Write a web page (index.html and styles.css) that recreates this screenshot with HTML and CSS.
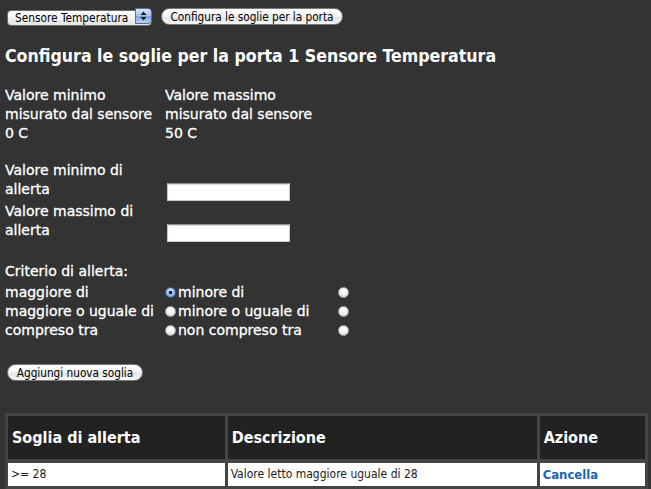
FILE: index.html
```html
<!DOCTYPE html>
<html lang="it">
<head>
<meta charset="utf-8">
<title>Soglie</title>
<link rel="stylesheet" href="styles.css">
</head>
<body>
<form class="toolbar">
  <div class="select-wrap">
    <select class="select"><option>Sensore Temperatura</option></select>
    <span class="select-arrows"><svg width="7" height="10" viewBox="0 0 7 10"><path d="M3.5 0.5 L6.5 4 L0.5 4 Z M3.5 9.5 L6.5 6 L0.5 6 Z" fill="#1a1a1a"/></svg></span>
  </div>
  <button type="button" class="btn">Configura le soglie per la porta</button>
</form>

<h2 class="title">Configura le soglie per la porta 1 Sensore Temperatura</h2>

<div class="info">
  <div>Valore minimo<br>misurato dal sensore<br>0 C</div>
  <div>Valore massimo<br>misurato dal sensore<br>50 C</div>
</div>

<div class="limits">
  <div class="lbl">Valore minimo di<br>allerta</div>
  <input class="field" type="text">
  <div class="lbl">Valore massimo di<br>allerta</div>
  <input class="field" type="text">
</div>

<div class="crit-title">Criterio di allerta:</div>
<div class="criteria">
  <span>maggiore di</span><input class="radio" type="radio" name="c" checked>
  <span>minore di</span><input class="radio" type="radio" name="c">
  <span>maggiore o uguale di</span><input class="radio" type="radio" name="c">
  <span>minore o uguale di</span><input class="radio" type="radio" name="c">
  <span>compreso tra</span><input class="radio" type="radio" name="c">
  <span>non compreso tra</span><input class="radio" type="radio" name="c">
</div>

<button type="button" class="btn btn-add">Aggiungi nuova soglia</button>

<table class="grid">
  <thead>
    <tr><th class="c1">Soglia di allerta</th><th class="c2">Descrizione</th><th class="c3">Azione</th></tr>
  </thead>
  <tbody>
    <tr><td>&gt;= 28</td><td>Valore letto maggiore uguale di 28</td><td><a class="link" href="#">Cancella</a></td></tr>
    <tr><td>&nbsp;</td><td>&nbsp;</td><td>&nbsp;</td></tr>
  </tbody>
</table>
</body>
</html>
```

FILE: styles.css
```css
html, body {
  background: #333333;
}
body {
  margin: 0;
  padding: 8px 3px 0 5px;
  color: #ffffff;
  font-family: "DejaVu Sans", sans-serif;
  font-size: 14px;
  line-height: 19px;
  overflow: hidden;
  height: 481px;
  -webkit-text-stroke: 0.3px #ffffff;
}

.toolbar {
  display: flex;
  align-items: flex-start;
  gap: 9px;
  margin: 0 0 0 2px;
  height: 17px;
}

.select-wrap {
  position: relative;
  width: 145px;
  height: 16px;
}
.select {
  appearance: none;
  -webkit-appearance: none;
  width: 145px;
  height: 16px;
  margin: 0;
  padding: 0 0 0 7px;
  border: 1px solid #6d6d6d;
  border-radius: 4px;
  background: linear-gradient(#ffffff, #f2f2f2 50%, #e4e4e4);
  font-family: "DejaVu Sans Condensed", sans-serif;
  font-size: 11.8px;
  line-height: 14px;
  color: #000;
  -webkit-text-stroke: 0;
}
.select-arrows {
  position: absolute;
  right: 0;
  top: 0;
  width: 17px;
  height: 16px;
  box-sizing: border-box;
  border: 1px solid #5a6f92;
  border-radius: 0 4px 4px 0;
  background: linear-gradient(#d7e6fb, #9fc0ec 50%, #7aa6e3 51%, #b7d2f5);
  display: flex;
  align-items: center;
  justify-content: center;
}

.btn {
  height: 17px;
  margin: 0;
  padding: 0 6px;
  border: 1px solid #7a7a7a;
  border-radius: 9px;
  background: linear-gradient(#ffffff, #f3f3f3 50%, #e2e2e2 51%, #f6f6f6);
  color: #000;
  font-family: "DejaVu Sans Condensed", sans-serif;
  font-size: 11.7px;
  line-height: 14px;
  white-space: nowrap;
  -webkit-text-stroke: 0;
}
.toolbar .btn {
  width: 182px;
}

.title {
  margin: 20px 0 0;
  font-family: "DejaVu Sans Condensed", sans-serif;
  font-size: 17.6px;
  line-height: 22px;
  font-weight: bold;
  -webkit-text-stroke: 0;
}

.info {
  margin-top: 19px;
  display: grid;
  grid-template-columns: 160px auto;
}

.limits {
  margin-top: 18px;
  display: grid;
  grid-template-columns: 162px 123px;
  grid-template-rows: 40px 40px;
  row-gap: 1px;
}
.lbl {
  align-self: start;
}
.field {
  align-self: end;
  width: 123px;
  height: 18px;
  box-sizing: border-box;
  margin: 0;
  border: 1px solid #c8c8c8;
  border-top-color: #8e8e8e;
  background: #fff;
  box-shadow: inset 0 1px 1px rgba(0,0,0,0.15);
}

.crit-title {
  margin-top: 20px;
}
.criteria {
  margin-top: 2px;
  display: grid;
  grid-template-columns: 160px 13px 160px 11px;
  grid-auto-rows: 19px;
  align-items: center;
  white-space: nowrap;
}
.criteria span:nth-of-type(2n) {
  grid-column: 3;
}
.radio {
  appearance: none;
  -webkit-appearance: none;
  width: 11px;
  height: 11px;
  margin: 0;
  border-radius: 50%;
  border: 1px solid #a8a8a8;
  box-sizing: border-box;
  background: radial-gradient(circle at 50% 35%, #ffffff 0, #f4f4f4 40%, #cfcfcf 100%);
}
.radio:checked {
  border-color: #3a5f9a;
  background: radial-gradient(circle, #1c2430 0, #1c2430 1.6px, transparent 2px),
              radial-gradient(circle at 50% 35%, #d6e7fd 0, #8fb6ec 55%, #4f86d6 100%);
}

.btn-add {
  display: block;
  margin: 24px 0 0 2px;
  width: 136px;
}

.grid {
  margin-top: 32px;
  width: 643px;
  border-collapse: separate;
  border-spacing: 3px 3px;
  background: #444444;
  table-layout: fixed;
  font-family: "DejaVu Sans Condensed", sans-serif;
  -webkit-text-stroke: 0;
}
.grid th {
  background: #222222;
  height: 43px;
  padding: 0 4px;
  text-align: left;
  font-size: 16px;
  font-weight: bold;
  color: #fff;
  vertical-align: middle;
}
.grid .c1 { width: 208px; }
.grid .c2 { width: 300px; }
.grid .c3 { width: 97px; }
.grid td {
  background: #ffffff;
  color: #222;
  height: 23px;
  padding: 0 3px;
  font-size: 12px;
  vertical-align: middle;
}
.grid thead th {
  border-bottom: 1px solid #444444;
}
.link {
  color: #1b65b3;
  font-weight: bold;
  font-size: 13px;
  text-decoration: none;
}
```
